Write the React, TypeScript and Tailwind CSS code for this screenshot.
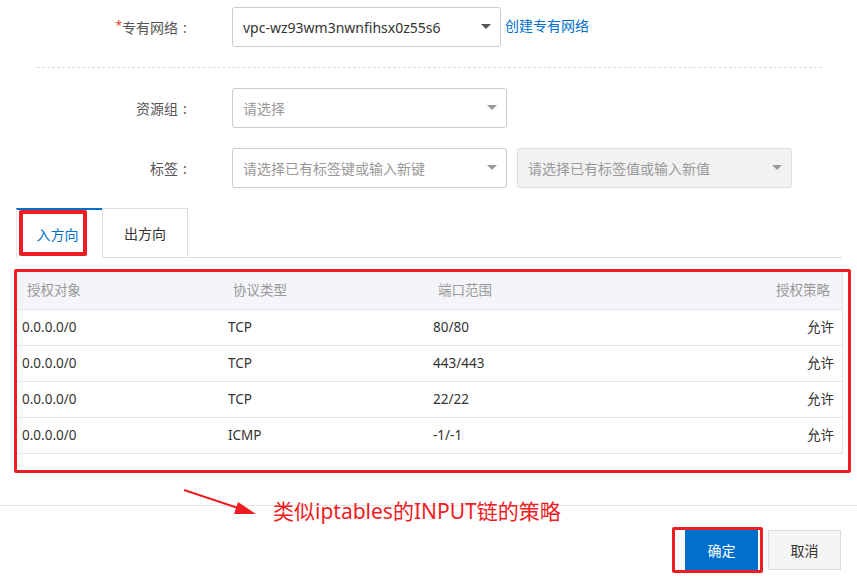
import React from "react";

const rows = [
  { target: "0.0.0.0/0", proto: "TCP", port: "80/80", policy: "允许" },
  { target: "0.0.0.0/0", proto: "TCP", port: "443/443", policy: "允许" },
  { target: "0.0.0.0/0", proto: "TCP", port: "22/22", policy: "允许" },
  { target: "0.0.0.0/0", proto: "ICMP", port: "-1/-1", policy: "允许" },
];

function Caret({ dark }: { dark?: boolean }) {
  return (
    <svg width="10" height="6" viewBox="0 0 10 6" className="shrink-0">
      <path d="M0 0 L10 0 L5 5 Z" fill={dark ? "#555" : "#999"} />
    </svg>
  );
}

function Select({
  value,
  placeholder,
  width,
  disabled,
  dark,
}: {
  value?: string;
  placeholder?: string;
  width: string;
  disabled?: boolean;
  dark?: boolean;
}) {
  return (
    <div
      className={`flex h-[40px] items-center justify-between rounded-[3px] border pl-[10px] pr-[9px] ${width} ${
        disabled ? "border-[#dcdcdc] bg-[#f2f2f2]" : "border-[#ccc] bg-white"
      }`}
    >
      <span className={value ? "text-[#333]" : "text-[#999]"}>{value ?? placeholder}</span>
      <Caret dark={dark} />
    </div>
  );
}

function Label({ children, required }: { children: React.ReactNode; required?: boolean }) {
  return (
    <div className="flex w-[192px] shrink-0 justify-end text-[#555]">
      {required && <span className="text-[12px] text-[#e4393c]">*</span>}
      <span>{children}</span>
      <span className="w-[14px] text-center">:</span>
    </div>
  );
}

export default function App() {
  return (
    <div
      className="relative h-[584px] w-[857px] overflow-hidden bg-white text-[14px]"
      style={{ fontFamily: '"Noto Sans", "Noto Sans CJK SC", sans-serif' }}
    >
      {/* form */}
      <div className="pt-[7px]">
        <div className="flex items-center">
          <Label required>专有网络</Label>
          <div className="ml-[40px]">
            <Select value="vpc-wz93wm3nwnfihsx0z55s6" width="w-[269px]" dark />
          </div>
          <a className="ml-[4px] -translate-y-[2px] text-[#0070cc]">创建专有网络</a>
        </div>

        <div className="ml-[37px] mt-[20px] w-[785px] border-t border-dashed border-[#ddd]" />

        <div className="mt-[20px] flex items-center">
          <Label>资源组</Label>
          <div className="ml-[40px]">
            <Select placeholder="请选择" width="w-[275px]" />
          </div>
        </div>

        <div className="mt-[20px] flex items-center">
          <Label>标签</Label>
          <div className="ml-[40px] flex gap-[10px]">
            <Select placeholder="请选择已有标签键或输入新键" width="w-[275px]" />
            <Select placeholder="请选择已有标签值或输入新值" width="w-[275px]" disabled />
          </div>
        </div>
      </div>

      {/* tabs */}
      <div className="ml-[16px] mr-[15px] mt-[20px] flex h-[50px] border-b border-[#ddd]">
        <div className="relative -mb-px flex w-[86px] items-center justify-center border-l border-t-2 border-l-[#e5e5e5] border-t-[#0070cc] bg-white text-[#0070cc]">
          <span className="pr-[4px]">入方向</span>
          <div className="absolute left-[2px] top-0 h-[46px] w-[68px] rounded-[2px] border-[4px] border-[#ee1d23]" />
        </div>
        <div className="-mb-px flex w-[86px] items-center justify-center border border-[#ddd] bg-white text-[#333]">
          出方向
        </div>
      </div>

      {/* table */}
      <div className="ml-[14px] mt-[11px] h-[204px] w-[837px] rounded-[2px] border-[3px] border-[#ee1d23] pr-[5px] text-[13.5px]">
        <div className="border-r border-[#e5e5e5]">
          <div className="flex h-[38px] items-center border-b border-[#e3e6ea] bg-[#f4f5f8] pl-[10px] pr-[12px] text-[#999]">
            <div className="w-[206px]">授权对象</div>
            <div className="w-[205px]">协议类型</div>
            <div className="flex-1">端口范围</div>
            <div>授权策略</div>
          </div>
          {rows.map((r, i) => (
            <div
              key={i}
              className="flex h-[36px] items-center border-b border-[#e3e6ea] pl-[5px] pr-[8px] text-[#333]"
            >
              <div className="w-[206px]">{r.target}</div>
              <div className="w-[205px]">{r.proto}</div>
              <div className="flex-1">{r.port}</div>
              <div>{r.policy}</div>
            </div>
          ))}
        </div>
      </div>

      {/* footer */}
      <div className="mt-[32px] border-t border-[#e3e3e3]" />
      <div className="mr-[16px] mt-[21px] flex items-start justify-end gap-[5px]">
        <div className="rounded-[2px] border-[3px] border-[#ee1d23] bg-white pl-[10px] pr-[2px]">
          <div className="flex h-[40px] w-[73px] items-center justify-center bg-[#0070cc] text-white">
            确定
          </div>
        </div>
        <div className="mt-[3px] flex h-[40px] w-[73px] items-center justify-center border border-[#ddd] bg-[#f5f5f5] text-[#333]">
          取消
        </div>
      </div>

      {/* annotation */}
      <svg className="absolute left-[180px] top-[486px]" width="80" height="32" viewBox="0 0 80 32">
        <line x1="4" y1="4" x2="64" y2="24" stroke="#ee1d23" strokeWidth="2" />
        <path d="M76 28 L58 16 L54 28 Z" fill="#ee1d23" />
      </svg>
      <div className="absolute left-[273px] top-[496px] text-[21px] leading-[30px] text-[#ee1d23]">
        类似iptables的INPUT链的策略
      </div>
    </div>
  );
}
